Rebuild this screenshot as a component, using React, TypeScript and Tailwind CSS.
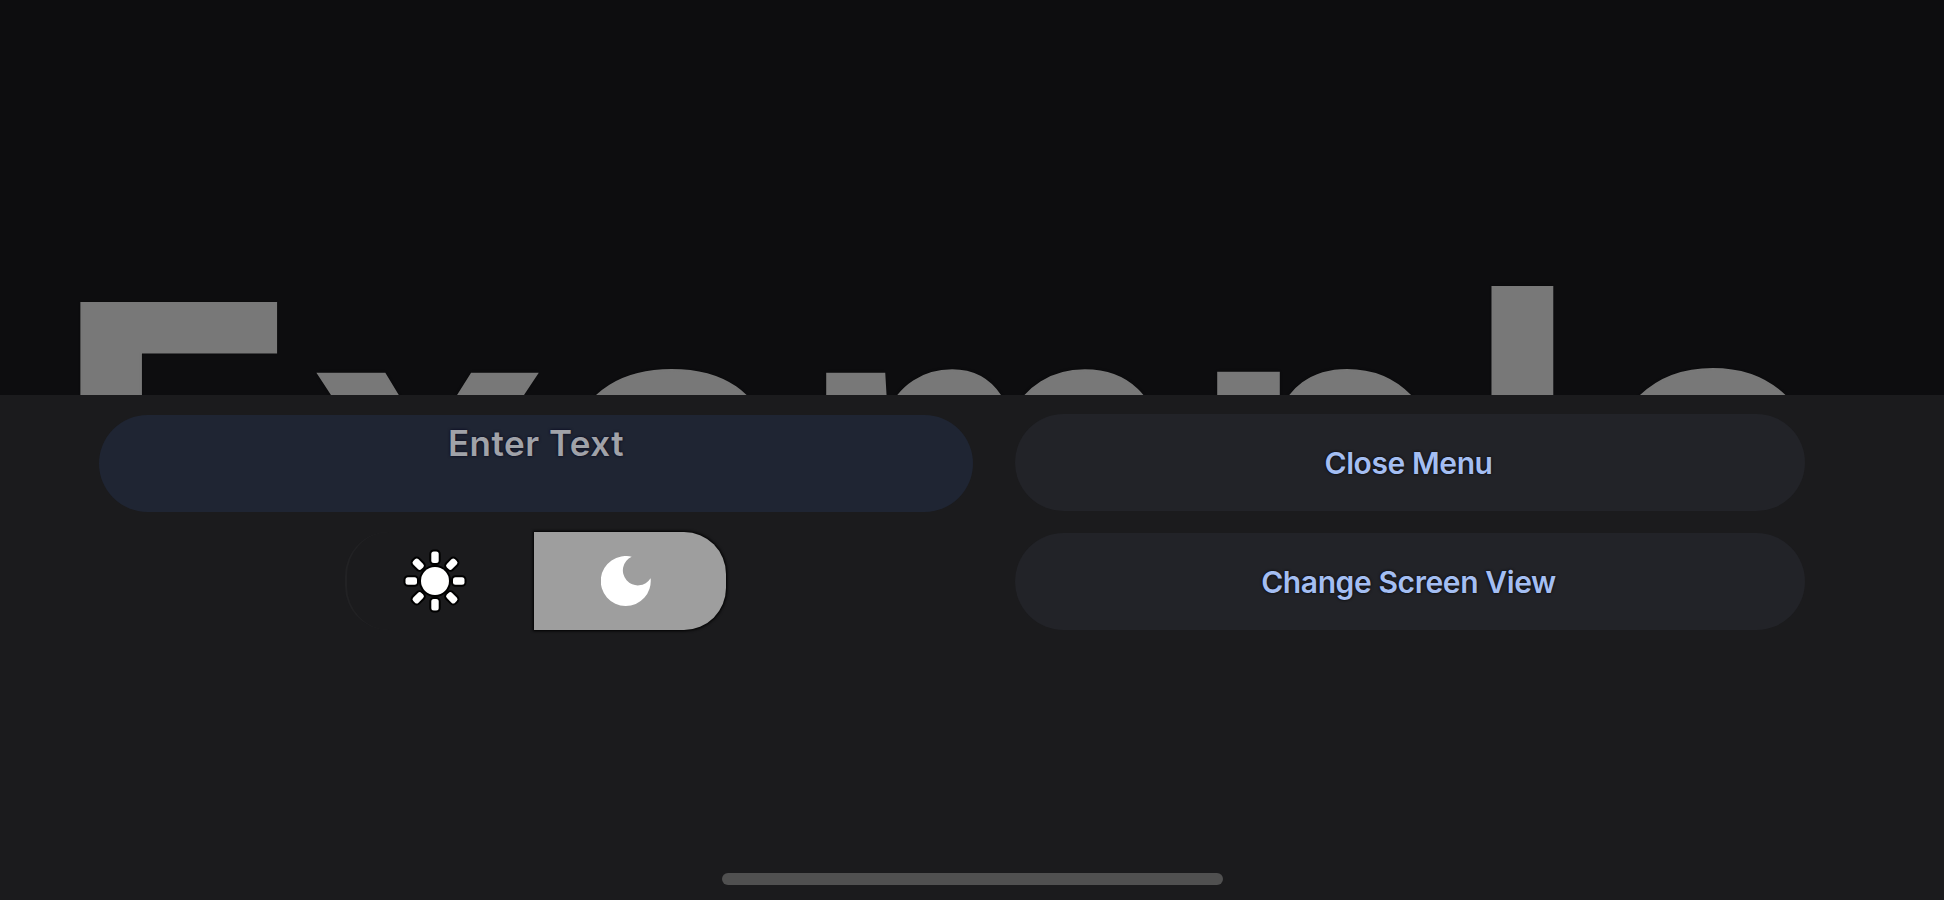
const LETTERS = [
  { char: "E", className: "w-[256px]" },
  { char: "x", className: "w-[234px] -mt-[2px] origin-center scale-x-105" },
  { char: "a", className: "w-[256px] -mt-[3px] pl-3" },
  { char: "m", className: "w-[391px] -mt-[2px] origin-left scale-x-105" },
  { char: "p", className: "w-[275px] -mt-[3px] origin-left scale-x-105" },
  { char: "l", className: "w-[125px] -mt-[16px] origin-left scale-x-102" },
  { char: "e", className: "w-[250px] -mt-[4px]" },
];

function SunIcon() {
  return (
    <svg width="60" height="62" viewBox="-30 -31 60 62" fill="#fff" stroke="#000" strokeWidth="4" paintOrder="stroke" className="overflow-visible">
      {[0, 45, 90, 135, 180, 225, 270, 315].map((a) => (
        <rect key={a} x="-3.7" y="-29.5" width="7.4" height="11.5" rx="2.5" transform={`rotate(${a})`} />
      ))}
      <circle r="14" />
    </svg>
  );
}

function MoonIcon() {
  return (
    <svg width="50" height="50" viewBox="0 0 50 50" fill="#fff">
      <path d="M30.7 .7A25 25 0 1 0 49.6 22.3A15 15 0 1 1 30.7 .7Z" />
    </svg>
  );
}

function MenuButton({ label }: { label: string }) {
  return (
    <button className="flex h-[97px] w-[790px] items-center justify-center rounded-full bg-[#222328] pr-[3px] text-[30px] leading-9 font-semibold tracking-[-0.4px] text-[#a4bef2] text-shadow-[0_0_3px_#000]">
      {label}
    </button>
  );
}

export default function App() {
  return (
    <div className="flex h-[900px] w-[1944px] flex-col overflow-hidden bg-[#0d0d0f] font-['Inter',sans-serif]">
      <div className="h-[395px] shrink-0 overflow-hidden pt-[248px] pl-[55px]">
        <div className="flex text-[400px] leading-[400px] font-bold text-[#787878] [-webkit-text-stroke:2px_#787878] text-shadow-[0_0_3px_#000]">
          {LETTERS.map(({ char, className }) => (
            <span key={char} className={`shrink-0 ${className}`}>{char}</span>
          ))}
        </div>
      </div>
      <div className="flex flex-1 flex-col items-center justify-between bg-[#1b1b1d] pt-[19px] pb-[15px]">
        <div className="flex w-full gap-[42px] pl-[99px]">
          <div className="flex w-[874px] flex-col items-center gap-5 pt-px">
            <div className="flex h-[97px] w-full justify-center rounded-full bg-[#1f2533] pt-1 text-[35px] leading-[48px] font-semibold tracking-[0.5px] text-[#a0a2a8] text-shadow-[0_0_3px_#00001a]">
              <span>Enter Text</span>
            </div>
            <div className="flex h-[98px] w-[382px]">
              <button className="flex w-[189px] shrink-0 items-center justify-center rounded-l-[44px] border-l-2 border-[#222224] pr-[11px]">
                <SunIcon />
              </button>
              <button className="flex w-[192px] shrink-0 items-center justify-center rounded-r-[42px] bg-[#9e9e9e] pr-2 shadow-[0_0_3px_1px_#000]">
                <MoonIcon />
              </button>
            </div>
          </div>
          <div className="flex flex-col gap-[22px]">
            <MenuButton label="Close Menu" />
            <MenuButton label="Change Screen View" />
          </div>
        </div>
        <div className="h-3 w-[501px] rounded-full bg-[#505050]" />
      </div>
    </div>
  );
}
